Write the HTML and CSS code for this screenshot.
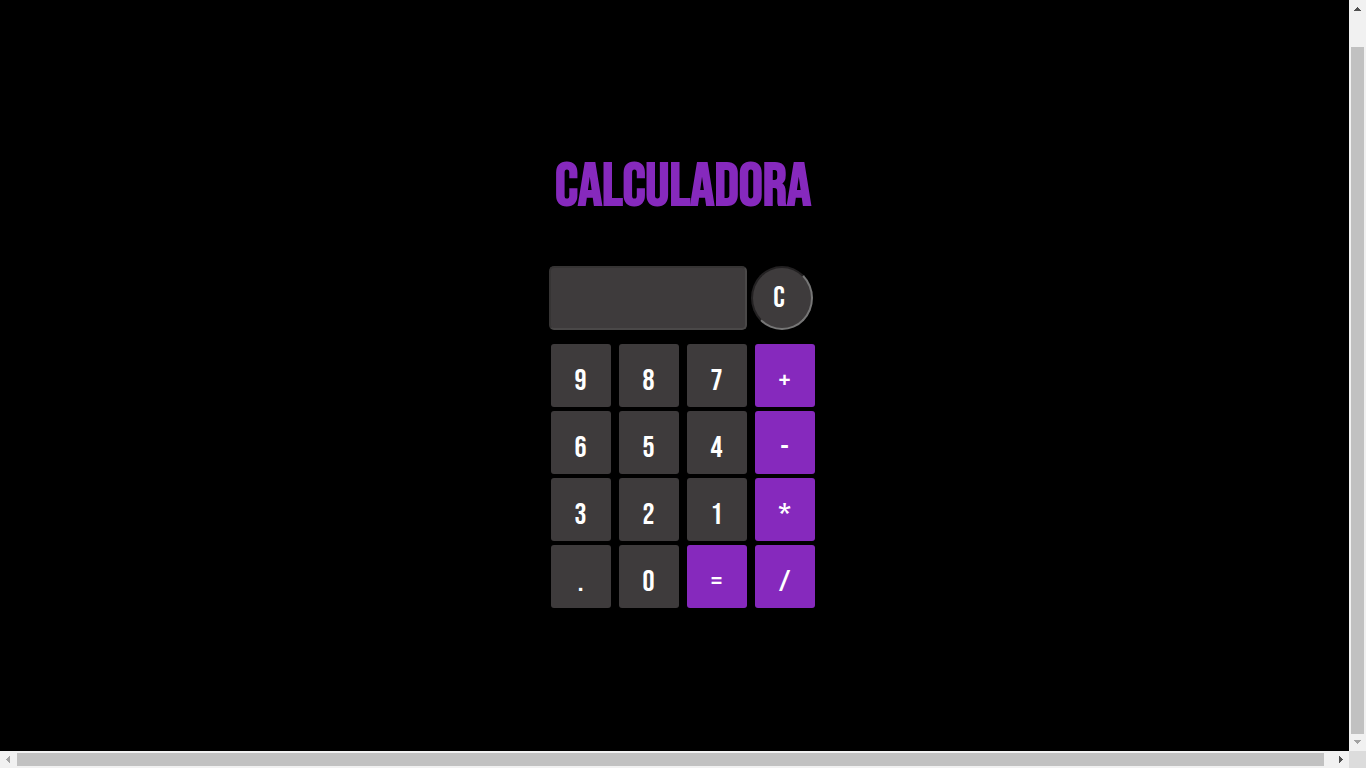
FILE: index.html
```html
<!DOCTYPE html>
<html lang="pt-BR">
<head>
<meta charset="utf-8">
<meta name="viewport" content="width=device-width, initial-scale=1">
<title>Calculadora</title>
<link rel="stylesheet" href="styles.css">
</head>
<body>
<div class="window">
  <div class="viewport">
    <main class="page">
      <h1 class="title">CALCULADORA</h1>
      <form class="calculator">
        <div class="screen-row">
          <input class="screen" type="text" aria-label="Resultado" readonly>
          <button class="clear" type="button">C</button>
        </div>
        <div class="keys">
          <button class="key" type="button">9</button>
          <button class="key" type="button">8</button>
          <button class="key" type="button">7</button>
          <button class="key key-op" type="button">+</button>
          <button class="key" type="button">6</button>
          <button class="key" type="button">5</button>
          <button class="key" type="button">4</button>
          <button class="key key-op" type="button">-</button>
          <button class="key" type="button">3</button>
          <button class="key" type="button">2</button>
          <button class="key" type="button">1</button>
          <button class="key key-op" type="button">*</button>
          <button class="key" type="button">.</button>
          <button class="key" type="button">0</button>
          <button class="key key-op" type="button">=</button>
          <button class="key key-op" type="button">/</button>
        </div>
      </form>
    </main>
  </div>
  <div class="bar bar-y" aria-hidden="true">
    <svg class="arrow" viewBox="0 0 17 17" shape-rendering="crispEdges"><path fill="#505050" d="M8 7h1v1h1v1h1v1h1v1H5v-1h1V9h1V8h1z"/></svg>
    <div class="thumb thumb-y"></div>
    <svg class="arrow" viewBox="0 0 17 17" shape-rendering="crispEdges"><path fill="#a3a3a3" d="M5 6h7v1h-1v1h-1v1H9v1H8V9H7V8H6V7H5z"/></svg>
  </div>
  <div class="bar bar-x" aria-hidden="true">
    <svg class="arrow" viewBox="0 0 17 17" shape-rendering="crispEdges"><path fill="#a3a3a3" d="M9 5h1v7H9v-1H8v-1H7V9H6V8h1V7h1V6h1z"/></svg>
    <div class="thumb thumb-x"></div>
    <svg class="arrow" viewBox="0 0 17 17" shape-rendering="crispEdges"><path fill="#505050" d="M7 5h1v1h1v1h1v1h1v1h-1v1H9v1H8v1H7z"/></svg>
  </div>
  <div class="corner"></div>
</div>
</body>
</html>
```
FILE: styles.css
```css
* {
  box-sizing: border-box;
}

body {
  margin: 0;
  background: #000;
  font-family: "Bebas Neue", "Liberation Sans Narrow", "Liberation Sans", sans-serif;
}

.window {
  display: grid;
  grid-template-columns: minmax(0, 1fr) 17px;
  grid-template-rows: minmax(0, 1fr) 17px;
  height: 100vh;
}

.viewport {
  overflow: hidden;
}

.page {
  display: flex;
  flex-direction: column;
  align-items: center;
  width: 100vw;
  padding-top: 151px;
}

.title {
  margin: 0 0 43px;
  color: #8629bd;
  font-size: 60px;
  line-height: 72px;
  font-weight: bold;
}

.calculator {
  width: 268px;
}

.screen-row {
  display: flex;
  gap: 4px;
  margin-bottom: 14px;
}

.screen {
  width: 198px;
  height: 64px;
  padding: 0 8px;
  border: 2px solid;
  border-color: #363434 #4a4848 #4a4848 #363434;
  border-radius: 5px;
  background: #3e3b3c;
  color: #fff;
  font: 30px "Bebas Neue", "Liberation Sans Narrow", sans-serif;
}

.clear {
  width: 62px;
  height: 64px;
  padding: 0 6px 0 0;
  border: 2px solid;
  border-color: #232122 #767676 #767676 #232122;
  border-radius: 50%;
  background: #3e3b3c;
  color: #fff;
  font: 30px "Bebas Neue", "Liberation Sans Narrow", sans-serif;
}

.keys {
  display: grid;
  grid-template-columns: repeat(4, 1fr);
  gap: 4px 8px;
  padding: 0 2px;
}

.key {
  height: 63px;
  padding: 10px 1px 0 0;
  border: 0;
  border-radius: 3px;
  background: #3e3b3c;
  color: #fff;
  font: 30px "Bebas Neue", "Liberation Sans Narrow", sans-serif;
}

.key-op {
  background: #8629bd;
}

.bar {
  display: flex;
  background: #f1f1f1;
}

.bar-y {
  flex-direction: column;
}

.arrow {
  flex: none;
  width: 17px;
  height: 17px;
}

.thumb {
  flex: 1;
  background: #c1c1c1;
}

.thumb-y {
  margin: 30px 2px 0;
}

.thumb-x {
  margin: 2px 8px 2px 0;
}

.corner {
  background: #dcdcdc;
}
```
